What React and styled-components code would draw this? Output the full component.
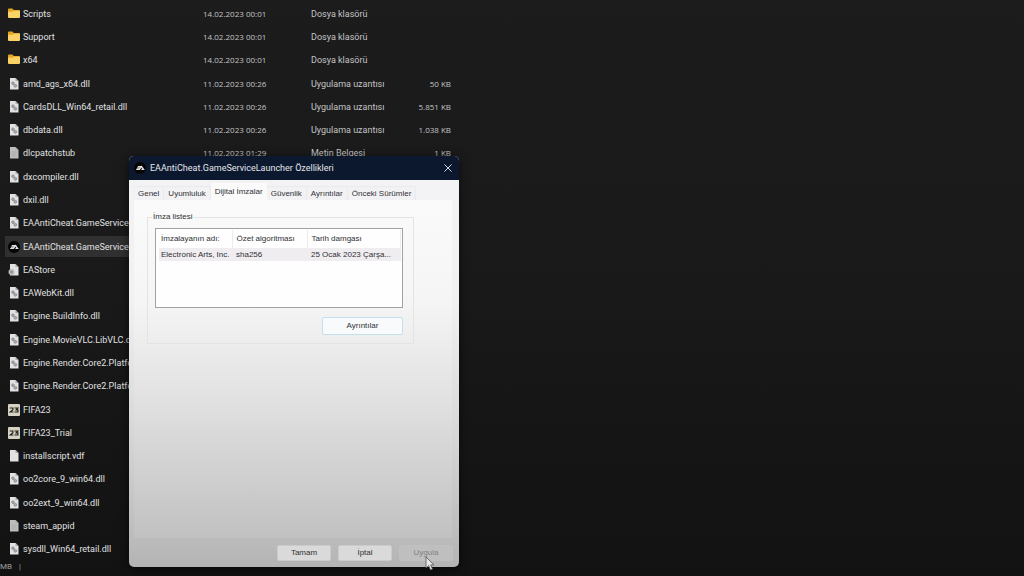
import React, { useState } from 'react';
import styled, { createGlobalStyle } from 'styled-components';

const GlobalStyle = createGlobalStyle`
  * {
    box-sizing: border-box;
  }

  body {
    margin: 0;
    background: #19191a;
    overflow: hidden;
  }
`;

const Explorer = styled.main`
  position: relative;
  display: flex;
  flex-direction: column;
  min-height: 100vh;
  padding-top: 2px;
  background: linear-gradient(#1c1c1d, #19191a 50%, #121213);
  color: #cfcfcf;
  font-family: Roboto, 'Noto Sans', sans-serif;
  font-size: 9px;
  line-height: 12px;
`;

const FileTable = styled.table`
  flex: 1;
  display: flex;
  margin: 0 5px;
`;

const FileBody = styled.tbody`
  display: grid;
  grid-auto-rows: 1fr;
`;

const FileRow = styled.tr`
  display: grid;
  grid-template-columns: 198px 108px 90px 50px;
  align-items: stretch;
  padding: 1px 0;
  background-color: ${(props) => (props.$selected ? '#303031' : 'transparent')};
  background-clip: content-box;
`;

const FileCell = styled.td`
  display: flex;
  align-items: center;
  justify-content: ${(props) => (props.$right ? 'flex-end' : 'flex-start')};
  gap: 3px;
  padding: 0;
  padding-left: ${(props) => (props.$name ? '3px' : '0')};
  white-space: nowrap;
  color: ${(props) => (props.$name ? '#e0e0e0' : '#c4c4c4')};
`;

const DigitCell = styled(FileCell)`
  font-family: 'Open Sans', 'Noto Sans', sans-serif;
  font-size: 8px;
`;

const StatusBar = styled.footer`
  display: flex;
  gap: 7px;
  height: 15px;
  color: #a0a0a0;
  font-size: 8px;
`;

const Dialog = styled.section`
  position: absolute;
  top: 156px;
  left: 129px;
  width: 330px;
  height: 411px;
  display: flex;
  flex-direction: column;
  overflow: hidden;
  border-radius: 5px;
  background: linear-gradient(#f3f3f5, #f1f1f2 35%, #d8d8d8 66%, #b4b4b4);
  box-shadow: 0 2px 10px rgba(0, 0, 0, 0.6);
  color: #303034;
  font-family: 'Liberation Sans', Arial, sans-serif;
  font-size: 8px;
  line-height: 12px;
`;

const TitleBar = styled.header`
  display: flex;
  align-items: center;
  gap: 4px;
  height: 24px;
  flex-shrink: 0;
  padding: 0 6px 0 5px;
  background: #0c182e;
`;

const Title = styled.h1`
  flex: 1;
  margin: 0;
  color: #e4e6ea;
  font-family: Roboto, 'Noto Sans', sans-serif;
  font-size: 9px;
  font-weight: 400;
`;

const CloseButton = styled.button`
  display: flex;
  padding: 0;
  border: 0;
  background: none;
  color: #d5d8de;
`;

const Tabs = styled.nav`
  display: flex;
  align-items: flex-end;
  height: 20px;
  flex-shrink: 0;
  padding: 0 5px;
`;

const Tab = styled.button`
  height: ${(props) => (props.$active ? '17px' : '14px')};
  padding: 0 4px;
  border: 1px solid #eaeaec;
  border-width: ${(props) => (props.$active ? '0' : '1px 1px 0 0')};
  background: ${(props) => (props.$active ? '#fafafb' : '#f2f2f4')};
  color: inherit;
  font: inherit;
  white-space: nowrap;
`;

const Panel = styled.div`
  flex: 1;
  margin: 0 7px 0 5px;
  padding: 11px 38px 0 13px;
  background: linear-gradient(#fafafb, #f5f5f6 30%, #e2e2e2 58%, #c1c1c1);
`;

const Group = styled.fieldset`
  display: flex;
  flex-direction: column;
  align-items: flex-end;
  gap: 9px;
  min-width: 0;
  margin: 0;
  padding: 5px 10px 8px 7px;
  border: 1px solid #e4e4e6;
`;

const Legend = styled.legend`
  margin-left: -3px;
  padding: 0 1px;
`;

const ListBox = styled.div`
  width: 100%;
  height: 80px;
  padding: 1px 1px 0 3px;
  border: 1px solid #a2a2a5;
  background: #fefefe;
`;

const SignatureTable = styled.table`
  width: 100%;
  table-layout: fixed;
  border-collapse: collapse;
  white-space: nowrap;
`;

const HeadCell = styled.th`
  width: ${(props) => props.$width};
  height: 18px;
  padding: 0 0 0 2px;
  border-right: 1px solid #ececee;
  font-weight: 400;
  text-align: left;

  & + & {
    padding-left: 4px;
  }
`;

const DataCell = styled.td`
  height: 13px;
  padding: 0 0 0 2px;
  background: #f0edf0;

  & + & {
    padding-left: 4px;
  }
`;

const DetailsButton = styled.button`
  width: 81px;
  height: 18px;
  padding: 0;
  border: 1px solid #c4e0ee;
  border-radius: 2px;
  background: #f8fafc;
  color: inherit;
  font: inherit;
`;

const Actions = styled.footer`
  display: flex;
  justify-content: flex-end;
  gap: 7px;
  padding: 7px 6px 6px;
`;

const ActionButton = styled.button`
  width: 54px;
  height: 16px;
  padding: 0;
  border: 1px solid #cbcbcb;
  border-radius: 2px;
  background: #dadadb;
  color: #303034;
  font: inherit;

  &:disabled {
    border-color: #c0c0c0;
    background: #bfbfbf;
    color: #808080;
  }
`;

const Cursor = styled.svg`
  position: absolute;
  top: 556px;
  left: 425px;
`;

const files = [
  { kind: 'folder', name: 'Scripts', date: '14.02.2023 00:01', type: 'Dosya klasörü' },
  { kind: 'folder', name: 'Support', date: '14.02.2023 00:01', type: 'Dosya klasörü' },
  { kind: 'folder', name: 'x64', date: '14.02.2023 00:01', type: 'Dosya klasörü' },
  { kind: 'dll', name: 'amd_ags_x64.dll', date: '11.02.2023 00:26', type: 'Uygulama uzantısı', size: '50 KB' },
  { kind: 'dll', name: 'CardsDLL_Win64_retail.dll', date: '11.02.2023 00:26', type: 'Uygulama uzantısı', size: '5.851 KB' },
  { kind: 'dll', name: 'dbdata.dll', date: '11.02.2023 00:26', type: 'Uygulama uzantısı', size: '1.038 KB' },
  { kind: 'text', name: 'dlcpatchstub', date: '11.02.2023 01:29', type: 'Metin Belgesi', size: '1 KB' },
  { kind: 'dll', name: 'dxcompiler.dll' },
  { kind: 'dll', name: 'dxil.dll' },
  { kind: 'dll', name: 'EAAntiCheat.GameService' },
  { kind: 'ea', name: 'EAAntiCheat.GameService', selected: true },
  { kind: 'config', name: 'EAStore' },
  { kind: 'dll', name: 'EAWebKit.dll' },
  { kind: 'dll', name: 'Engine.BuildInfo.dll' },
  { kind: 'dll', name: 'Engine.MovieVLC.LibVLC.d' },
  { kind: 'dll', name: 'Engine.Render.Core2.Platfo' },
  { kind: 'dll', name: 'Engine.Render.Core2.Platfo' },
  { kind: 'fifa', name: 'FIFA23' },
  { kind: 'fifa', name: 'FIFA23_Trial' },
  { kind: 'file', name: 'installscript.vdf' },
  { kind: 'dll', name: 'oo2core_9_win64.dll' },
  { kind: 'dll', name: 'oo2ext_9_win64.dll' },
  { kind: 'text', name: 'steam_appid' },
  { kind: 'dll', name: 'sysdll_Win64_retail.dll' },
];

const tabs = ['Genel', 'Uyumluluk', 'Dijital İmzalar', 'Güvenlik', 'Ayrıntılar', 'Önceki Sürümler'];

const EaLogo = () => (
  <svg width="12" height="12" viewBox="0 0 12 12" aria-hidden="true">
    <circle cx="6" cy="6" r="6" fill="#050506" />
    <path d="M3.800 4.600h3M3 6h3M2.200 7.400h3.200L7.600 4.600l2 2.800H7.400" fill="none" stroke="#e4e4e4" strokeWidth="1.200" />
  </svg>
);

const FileIcon = ({ kind }) => {
  if (kind === 'ea') return <EaLogo />;
  if (kind === 'folder') {
    return (
      <svg width="12" height="12" viewBox="0 0 12 12" aria-hidden="true">
        <path d="M0 1.500a1 1 0 0 1 1-1h3.400l1.400 1.400H11a1 1 0 0 1 1 1V6H0z" fill="#e5a520" />
        <path d="M0 3.700h4.600l1.300-1H12V9a1 1 0 0 1-1 1H1a1 1 0 0 1-1-1z" fill="#fbd266" />
      </svg>
    );
  }
  if (kind === 'fifa') {
    return (
      <svg width="12" height="12" viewBox="0 0 12 12" aria-hidden="true">
        <rect width="12" height="12" rx="1" fill="#d6d2c2" />
        <path d="M1.700 4h3.200v1.800L2.300 8h3.200M6.500 4h3.300L8.200 5.800h1.700V8H6.500" fill="none" stroke="#24231f" strokeWidth="1.200" />
      </svg>
    );
  }
  return (
    <svg width="12" height="12" viewBox="0 0 12 12" aria-hidden="true">
      <path d="M2 0h5.500L10.500 3v8.500H2z" fill={kind === 'text' ? '#bdbdbd' : '#e2e2e2'} />
      <path d="M7.500 0v3h3z" fill="#a9a9a9" />
      {kind === 'dll' && (
        <g fill="#a9adb2" stroke="#80858b" strokeWidth=".8">
          <circle cx="5" cy="5.200" r="1.300" />
          <circle cx="7.300" cy="7.800" r="1.400" />
        </g>
      )}
      {kind === 'text' && <path d="M3.500 5h5M3.500 7h5M3.500 9h5" stroke="#a3a3a3" strokeWidth=".6" />}
      {kind === 'config' && (
        <g>
          <circle cx="3.500" cy="8" r="3" fill="#b9b9b9" />
          <circle cx="3.500" cy="8" r="1.200" fill="#8a8a8a" />
        </g>
      )}
    </svg>
  );
};

const PropertiesDialog = () => {
  const [activeTab, setActiveTab] = useState('Dijital İmzalar');

  return (
    <Dialog role="dialog" aria-labelledby="dialog-title">
      <TitleBar>
        <EaLogo />
        <Title id="dialog-title">EAAntiCheat.GameServiceLauncher Özellikleri</Title>
        <CloseButton type="button">
          <svg width="10" height="10" viewBox="0 0 10 10" aria-hidden="true">
            <path d="M1.500 1.500l7 7M8.500 1.500l-7 7" stroke="currentColor" strokeWidth="1" />
          </svg>
        </CloseButton>
      </TitleBar>
      <Tabs>
        {tabs.map((tab) => (
          <Tab key={tab} type="button" $active={tab === activeTab} onClick={() => setActiveTab(tab)}>
            {tab}
          </Tab>
        ))}
      </Tabs>
      <Panel>
        <Group>
          <Legend>İmza listesi</Legend>
          <ListBox>
            <SignatureTable>
              <thead>
                <tr>
                  <HeadCell $width="73px">İmzalayanın adı:</HeadCell>
                  <HeadCell $width="75px">Özet algoritması</HeadCell>
                  <HeadCell>Tarih damgası</HeadCell>
                </tr>
              </thead>
              <tbody>
                <tr>
                  <DataCell>Electronic Arts, Inc.</DataCell>
                  <DataCell>sha256</DataCell>
                  <DataCell>25 Ocak 2023 Çarşa...</DataCell>
                </tr>
              </tbody>
            </SignatureTable>
          </ListBox>
          <DetailsButton type="button">Ayrıntılar</DetailsButton>
        </Group>
      </Panel>
      <Actions>
        <ActionButton type="button">Tamam</ActionButton>
        <ActionButton type="button">İptal</ActionButton>
        <ActionButton type="button" disabled>Uygula</ActionButton>
      </Actions>
    </Dialog>
  );
};

const App = () => (
  <>
    <GlobalStyle />
    <Explorer>
      <FileTable>
        <FileBody>
          {files.map((file, index) => (
            <FileRow key={index} $selected={file.selected}>
              <FileCell $name>
                <FileIcon kind={file.kind} />
                {file.name}
              </FileCell>
              <DigitCell>{file.date}</DigitCell>
              <FileCell>{file.type}</FileCell>
              <DigitCell $right>{file.size}</DigitCell>
            </FileRow>
          ))}
        </FileBody>
      </FileTable>
      <StatusBar>
        <span>MB</span>
        <span>|</span>
      </StatusBar>
      <PropertiesDialog />
      <Cursor width="10" height="16" viewBox="0 0 10 16" aria-hidden="true">
        <path d="M1 1v11l2.600-2.400L5.500 14l2-.9-1.900-4.200H9z" fill="#e6e6e6" stroke="#555" strokeWidth=".8" />
      </Cursor>
    </Explorer>
  </>
);

export default App;
